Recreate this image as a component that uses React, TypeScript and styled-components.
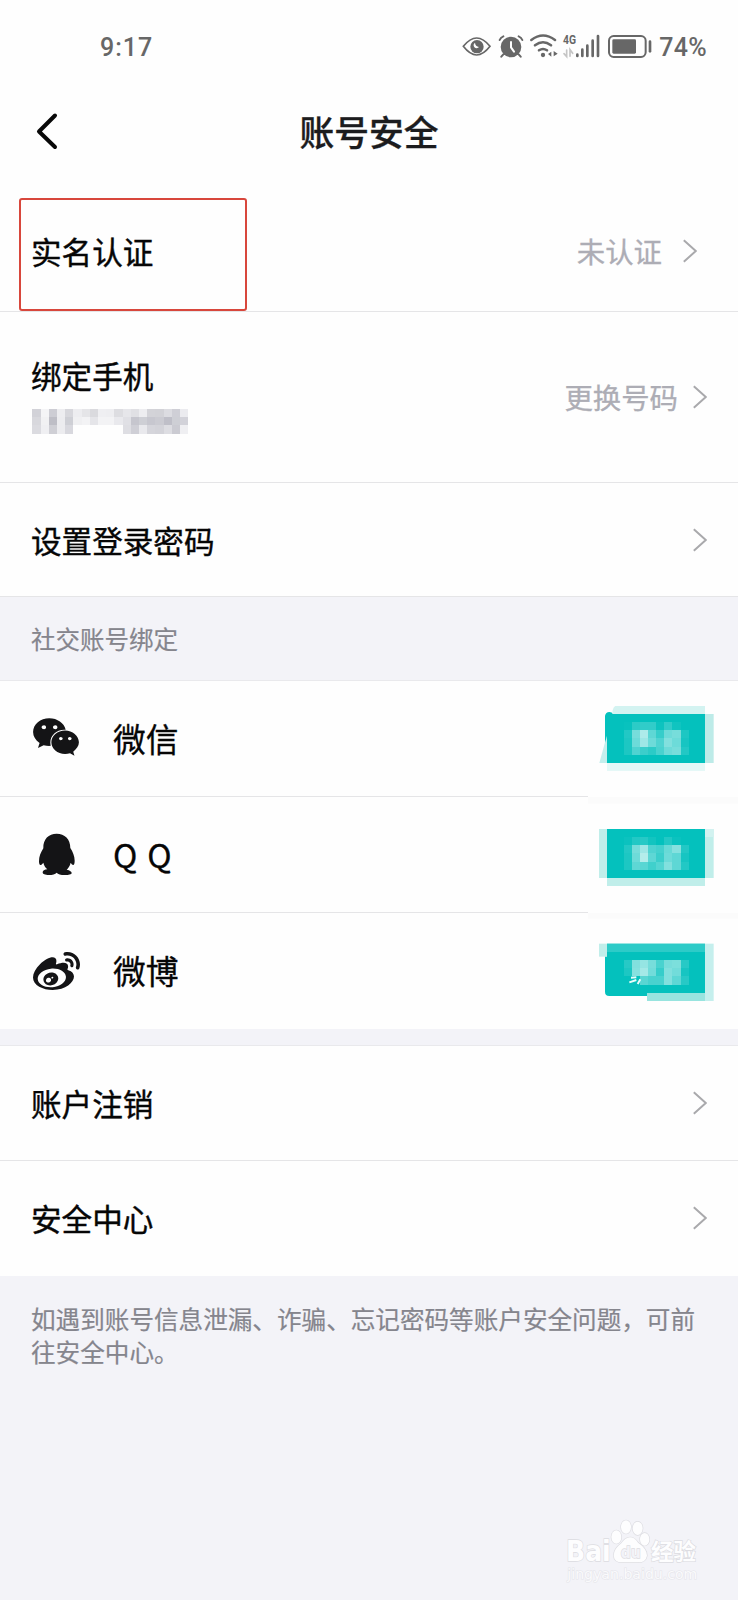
import React from 'react';
import styled, { createGlobalStyle } from 'styled-components';
import { FaWeibo, FaWeixin } from 'react-icons/fa';

const GlobalStyle = createGlobalStyle`
  * { box-sizing: border-box; }
  body { margin: 0; background: #f3f3f8; }
`;

const Page = styled.div`
  position: relative;
  width: 738px;
  height: 1600px;
  overflow: hidden;
  background: #f3f3f8;
  font-family: 'Noto Sans CJK SC', 'Noto Sans', sans-serif;
  color: #060606;
`;

const StatusBar = styled.div`
  height: 90px;
  padding: 3px 31px 0 100px;
  display: flex;
  align-items: center;
  justify-content: space-between;
  background: #fefefe;
  font: 500 25px/30px Roboto, sans-serif;
  color: #676767;
`;

const Time = styled.span`
  padding-top: 2px;
  letter-spacing: 1px;
`;

const Indicators = styled.div`
  display: flex;
  align-items: center;
  gap: 7px;
`;

const Battery = styled.span`
  padding-top: 2px;
  letter-spacing: 0.3px;
`;

const Header = styled.header`
  height: 106px;
  padding: 0 36px;
  display: grid;
  grid-template-columns: 22px 1fr 22px;
  background: #fefefe;
`;

const Back = styled.svg`
  margin-top: 22px;
`;

const Title = styled.h1`
  margin: 16px 0 0;
  text-align: center;
  font-size: 34.8px;
  line-height: 50px;
  font-weight: 500;
  color: #1c1c1e;
  -webkit-text-stroke: 0.3px #1c1c1e;
`;

const Row = styled.div<{ $height?: number; $inset?: number; $lift?: number; $last?: boolean }>`
  position: relative;
  height: ${p => p.$height ?? 115}px;
  padding: 0 ${p => p.$inset ?? 31}px ${p => p.$lift ?? 0}px 31px;
  display: flex;
  align-items: center;
  justify-content: space-between;
  background: #fefefe;
  border-bottom: ${p => (p.$last ? 0 : 1)}px solid #e5e5e7;
`;

const Label = styled.div`
  font-size: 30.6px;
  line-height: 44px;
  font-weight: 400;
  -webkit-text-stroke: 0.4px #060606;
`;

const Phone = styled.div`
  display: flex;
  flex-direction: column;
  gap: 12px;
  padding-bottom: 7px;
`;

const Action = styled.div<{ $gap?: number }>`
  display: flex;
  align-items: center;
  gap: ${p => p.$gap ?? 15}px;
  font-size: 28.4px;
  line-height: 40px;
  color: #adadb5;
  -webkit-text-stroke: 0.3px #adadb5;
`;

const Highlight = styled.div`
  position: absolute;
  left: 19px;
  top: 2px;
  width: 228px;
  height: 113px;
  border: 2px solid #d8473c;
  border-radius: 3px;
`;

const SectionTitle = styled.div`
  height: 84px;
  padding: 24px 31px 0;
  font-size: 24.5px;
  line-height: 36px;
  color: #85858d;
  border-bottom: 1px solid #e9e9ec;
  -webkit-text-stroke: 0.2px #85858d;
`;

const SocialRow = styled.div`
  display: grid;
  grid-template-columns: 588px 150px;
  height: 116px;
  background: #fefefe;
`;

const Account = styled.div<{ $last?: boolean }>`
  display: grid;
  grid-template-columns: 48px 1fr;
  column-gap: 33px;
  align-items: center;
  justify-items: start;
  padding-left: 32px;
  border-bottom: 1px solid ${p => (p.$last ? '#fefefe' : '#e5e5e7')};
  color: #141416;
`;

const Glyph = styled.span<{ $top?: number; $bottom?: number }>`
  display: flex;
  justify-self: end;
  padding: ${p => p.$top ?? 0}px 0 ${p => p.$bottom ?? 0}px;
`;

const SocialName = styled.div<{ $spaced?: boolean }>`
  padding-bottom: 2px;
  font-size: 32.8px;
  line-height: 48px;
  color: #060606;
  word-spacing: ${p => (p.$spaced ? 2.5 : 0)}px;
  -webkit-text-stroke: 0.3px #060606;
`;

const Divider = styled.div`
  height: 17px;
  border-bottom: 1px solid #e9e9ec;
`;

const Note = styled.p`
  margin: 0;
  padding: 26px 30px 0 31px;
  font-size: 24.6px;
  line-height: 33px;
  color: #85858d;
  -webkit-text-stroke: 0.2px #85858d;
`;

const Watermark = styled.svg`
  position: absolute;
  left: 558px;
  top: 1515px;
`;

const Chevron = () => (
  <svg width="14" height="24" viewBox="0 0 14 24" fill="none" stroke="#a9a9ac" strokeWidth="2">
    <path d="M0.8 1.2 12.8 12 0.8 22.8" />
  </svg>
);

const StatusIcons = () => (
  <svg width="190" height="30" viewBox="66 48 570 90" fill="none" stroke="#676767" strokeLinecap="round">
    <path d="M70 91Q110 41 150 91Q110 143 70 91Z" strokeWidth="5" />
    <circle cx="111" cy="92" r="20" fill="#676767" stroke="none" />
    <path d="M105 80A9 9 0 1 0 117 93A15 15 0 0 1 105 80Z" fill="#fefefe" stroke="none" />
    <circle cx="213" cy="93" r="31" fill="#676767" stroke="none" />
    <path d="M179 72Q182 64 190 61M236 61Q244 64 247 72M190 115l-6 7M236 115l6 7" strokeWidth="6" />
    <path d="M213 78v16l9 13" stroke="#fefefe" strokeWidth="6" />
    <path d="M274 72Q309 45 345 72M285 88Q309 70 333 88M297 103Q309 95 321 103" strokeWidth="7.5" />
    <circle cx="309" cy="117" r="6.5" fill="#676767" stroke="none" />
    <path d="M334 107v15l-10-8zM341 105v16l12-8z" fill="#676767" stroke="none" />
    <text x="369" y="84" fill="#676767" stroke="none" fontFamily="Roboto" fontWeight="700" fontSize="39" textLength="39" lengthAdjust="spacingAndGlyphs">4G</text>
    <path d="M380 102v20l-8-9M390 121v-20l8 11" stroke="#c5c5c5" strokeWidth="5" />
    <path d="M412 116v4M427 101v19M442 89v31M458 74v46M474 60v60" strokeWidth="8" />
    <rect x="507" y="60" width="110" height="63" rx="14" strokeWidth="6" />
    <rect x="517" y="70" width="71" height="43" rx="4" fill="#676767" stroke="none" />
    <path d="M630 77v29" strokeWidth="8" />
  </svg>
);

const phonePixels: string[][] = [
  ['#d2d2d8', '#f4f4f6', '#cdcdd4', '#ededf0', '#d7d7dc', '#ededf0', '#e5e5e8', '#dadade', '#efeff2', '#eeeef1', '#dddde1', '#e6e6ea', '#e0e0e4', '#ededf0', '#d3d3d8', '#d2d2d7', '#dcdce1', '#cfcfd6', '#ebebef'],
  ['#d8d8dd', '#f1f1f3', '#bebec6', '#ececef', '#cecfd5', '#f0f0f2', '#f3f3f5', '#e5e5e9', '#f3f3f5', '#f3f3f5', '#e9e9ed', '#e0e0e5', '#c6c6ce', '#cecfd5', '#c7c7cf', '#cbcbd2', '#bfbfc8', '#cecfd5', '#d2d2d9'],
  ['#dbdbe0', '#efeff2', '#cfcfd5', '#ececef', '#d8d8de', '#fefefe', '#fefefe', '#fefefe', '#fefefe', '#fefefe', '#fefefe', '#dedee3', '#cfcfd6', '#e9e9ed', '#d5d5db', '#d3d3d9', '#dddde2', '#cbcbd2', '#efeff2'],
];

const PhoneMosaic = () => (
  <svg width="158" height="25" viewBox="-1.4 0 158 25" shapeRendering="crispEdges">
    {phonePixels.map((line, r) =>
      line.map((fill, c) => <rect key={`${r}-${c}`} x={c * 8.2} y={r * 8.2} width="8.4" height="8.4" fill={fill} />),
    )}
  </svg>
);

// Opacity of white over the teal button, one entry per mosaic cell.
const Cells = ({ y, grid }: { y: number; grid: number[][] }) => (
  <g fill="#fff" shapeRendering="crispEdges">
    {grid.map((line, r) =>
      line.map((o, c) => (
        <rect key={`${r}-${c}`} x={131 + c * 24.4} y={y + r * 24.6} width="24.4" height="24.6" opacity={o / 100} />
      )),
    )}
  </g>
);

const WechatButton = () => (
  <svg width="150" height="116" viewBox="24 33 450 348">
    <path d="M106 108H375V132H97Q96 115 106 108Z" fill="#d3f3f1" />
    <path d="M375 132H401V279H375Z" fill="#bdebe8" />
    <path d="M81 279H375V303H81Z" fill="#e5f8f7" />
    <path d="M78 206L81 198V279H58Z" fill="#c4efed" />
    <path d="M75 218V138Q77 126 88 126Q97 126 98 132H375V279H81V198Z" fill="#04c1bd" />
    <Cells
      y={156}
      grid={[
        [2, 16, 18, 18, 4, 18, 5, 0],
        [12, 46, 68, 36, 20, 42, 46, 10],
        [10, 42, 62, 42, 30, 50, 42, 8],
        [10, 30, 22, 16, 28, 42, 46, 12],
      ]}
    />
  </svg>
);

const QQButton = () => (
  <svg width="150" height="116" viewBox="24 21 450 348">
    <path d="M24 21H474V41H24Z" fill="#fbfbfb" />
    <path d="M57 117H401V264H57ZM81 264H375V288H81Z" fill="#c0eeea" />
    <path d="M375 117H401V141H375Z" fill="#d2f2f0" />
    <path d="M81 117H375V264H81Z" fill="#04c1bd" />
    <Cells
      y={141}
      grid={[
        [3, 12, 14, 6, 0, 12, 3, 0],
        [12, 46, 62, 30, 26, 40, 52, 12],
        [10, 42, 70, 36, 22, 42, 36, 8],
        [10, 36, 34, 24, 32, 50, 36, 12],
      ]}
    />
  </svg>
);

const WeiboButton = () => (
  <svg width="150" height="116" viewBox="24 9 450 348">
    <path d="M24 9H474V26H24Z" fill="#fbfbfb" />
    <path d="M57 101H81V140H57Z" fill="#c0eeea" />
    <path d="M375 101H401V273H375Z" fill="#c5efed" />
    <path d="M81 101H375V249H201V258H88Q75 258 75 245V140H81Z" fill="#04c1bd" />
    <path d="M81 101H375V126H81Z" fill="#2dcbc8" />
    <path d="M201 249H375V273H201Z" fill="#98e4df" />
    <Cells
      y={150}
      grid={[
        [14, 50, 58, 46, 28, 46, 48, 14],
        [10, 52, 64, 44, 20, 50, 44, 8],
        [0, 0, 34, 28, 28, 50, 36, 14],
      ]}
    />
    <path d="M148 217l21-7M173 222l8-14M153 203l16-1" stroke="#e8fbfa" strokeWidth="6" />
  </svg>
);

const QQIcon = () => (
  <svg width="48" height="42" viewBox="96 699 144 126" fill="currentColor">
    <path d="M170 701C194 701 211 717 211 744C218 754 224 769 224 782C224 796 219 799 212 788C210 797 205 804 200 809C210 811 215 815 215 819C215 824 206 825 194 825C182 825 174 823 170 818C166 823 157 825 147 825C135 825 128 823 128 817C128 812 134 809 142 808C136 803 132 797 130 788C122 799 117 797 117 784C117 769 122 758 130 745C129 717 146 701 170 701Z" />
  </svg>
);

export default function App() {
  return (
    <Page>
      <GlobalStyle />
      <StatusBar>
        <Time>9:17</Time>
        <Indicators>
          <StatusIcons />
          <Battery>74%</Battery>
        </Indicators>
      </StatusBar>
      <Header>
        <Back width="22" height="38" viewBox="0 0 22 38" fill="none" stroke="#080808" strokeWidth="4" strokeLinecap="round" strokeLinejoin="round">
          <path d="M19 3.5 3 19.5 19 35" />
        </Back>
        <Title>账号安全</Title>
      </Header>
      <Row $height={116} $inset={41} $lift={6}>
        <Label>实名认证</Label>
        <Action $gap={21}>未认证<Chevron /></Action>
        <Highlight />
      </Row>
      <Row $height={171}>
        <Phone>
          <Label>绑定手机</Label>
          <PhoneMosaic />
        </Phone>
        <Action>更换号码<Chevron /></Action>
      </Row>
      <Row $height={114}>
        <Label>设置登录密码</Label>
        <Chevron />
      </Row>
      <SectionTitle>社交账号绑定</SectionTitle>
      <SocialRow>
        <Account>
          <Glyph $bottom={4}><FaWeixin size={48} /></Glyph>
          <SocialName>微信</SocialName>
        </Account>
        <WechatButton />
      </SocialRow>
      <SocialRow>
        <Account>
          <Glyph $bottom={2}><QQIcon /></Glyph>
          <SocialName $spaced>Q Q</SocialName>
        </Account>
        <QQButton />
      </SocialRow>
      <SocialRow>
        <Account $last>
          <Glyph $top={3}><FaWeibo size={47} /></Glyph>
          <SocialName>微博</SocialName>
        </Account>
        <WeiboButton />
      </SocialRow>
      <Divider />
      <Row>
        <Label>账户注销</Label>
        <Chevron />
      </Row>
      <Row $last $lift={2}>
        <Label>安全中心</Label>
        <Chevron />
      </Row>
      <Note>如遇到账号信息泄漏、诈骗、忘记密码等账户安全问题，可前往安全中心。</Note>
      <Watermark width="150" height="72" viewBox="54 45 450 216" fill="#fdfdfe" stroke="#dcdce1" strokeWidth="4" paintOrder="stroke">
        <text x="78" y="184" fontFamily="DejaVu Sans" fontWeight="700" fontSize="85" textLength="134" lengthAdjust="spacingAndGlyphs">Bai</text>
        <ellipse cx="229" cy="111" rx="15" ry="20" />
        <ellipse cx="258" cy="81" rx="15" ry="20" />
        <ellipse cx="293" cy="85" rx="15" ry="20" />
        <ellipse cx="314" cy="118" rx="14" ry="19" />
        <path d="M270 112Q284 112 294 128Q321 146 321 167Q317 187 296 187H246Q223 187 221 167Q222 146 244 130Q256 112 270 112Z" />
        <text x="242" y="175" fill="#f3f3f8" fontFamily="DejaVu Sans" fontWeight="700" fontSize="50" textLength="60" lengthAdjust="spacingAndGlyphs">du</text>
        <text x="333" y="179" fontFamily="Noto Sans CJK SC" fontWeight="700" fontSize="68" textLength="135" lengthAdjust="spacingAndGlyphs">经验</text>
        <text x="82" y="236" fill="#fafafc" stroke="#e4e4e9" strokeWidth="3" fontFamily="DejaVu Sans" fontSize="41" textLength="390" lengthAdjust="spacingAndGlyphs">jingyan.baidu.com</text>
      </Watermark>
    </Page>
  );
}
